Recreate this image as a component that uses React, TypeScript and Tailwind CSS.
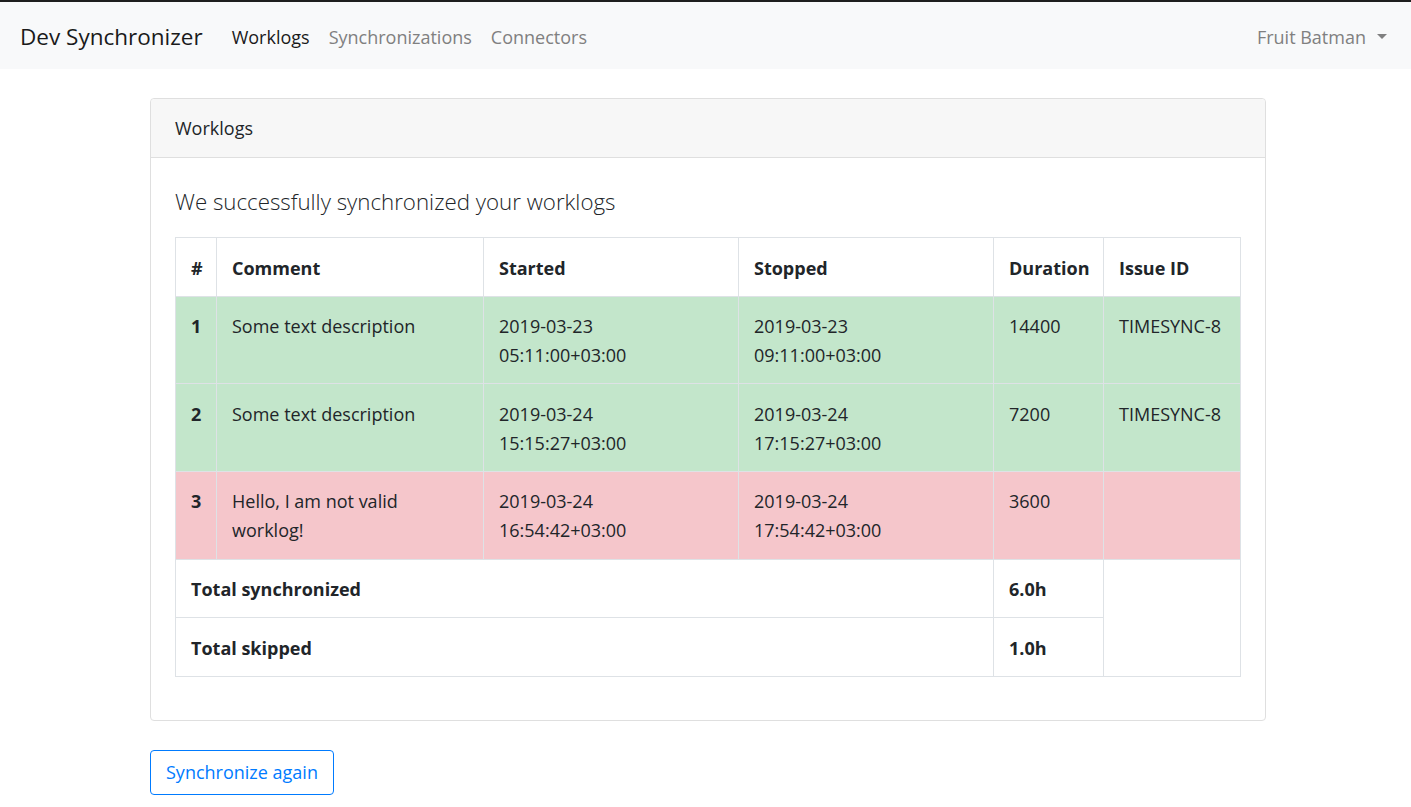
import React from "react";

const rows = [
  { n: 1, c: "Some text description", s: ["2019-03-23", "05:11:00+03:00"], e: ["2019-03-23", "09:11:00+03:00"], d: "14400", i: "TIMESYNC-8", ok: true },
  { n: 2, c: "Some text description", s: ["2019-03-24", "15:15:27+03:00"], e: ["2019-03-24", "17:15:27+03:00"], d: "7200", i: "TIMESYNC-8", ok: true },
  { n: 3, c: "Hello, I am not valid worklog!", s: ["2019-03-24", "16:54:42+03:00"], e: ["2019-03-24", "17:54:42+03:00"], d: "3600", i: "", ok: false },
];

export default function App() {
  const td = "border border-[#dee2e6] px-[15px] pt-[15.5px] pb-[13.5px] align-top";
  return (
    <div className="min-h-[807px] bg-white text-[#212529] text-[18px] leading-[28.8px]" style={{ fontFamily: '"Segoe UI", "Open Sans", sans-serif' }}>
      <nav className="h-[69px] border-t-2 border-[#1e1e1e] bg-[#f8f9fa] flex items-center pt-[3px] pl-[20px] pr-[24px]">
        <span className="text-[22.5px] text-[#1a1a1a] mr-[29px]">Dev Synchronizer</span>
        <div className="flex gap-[19px] text-[18px]">
          <span className="text-[#1a1a1a]">Worklogs</span>
          <span className="text-[#808080]">Synchronizations</span>
          <span className="text-[#808080]">Connectors</span>
        </div>
        <div className="ml-auto flex items-center text-[#808080]">
          <span>Fruit Batman</span>
          <span className="ml-[11px] w-0 h-0 border-l-[5px] border-r-[5px] border-t-[5px] border-l-transparent border-r-transparent border-t-[#808080]" />
        </div>
      </nav>
      <div className="pl-[150px] pr-[145px] pt-[29px]">
        <div className="border border-[#dfdfdf] rounded-[4px]">
          <div className="h-[59px] flex items-center pt-[1px] px-[24px] bg-[#f7f7f7] border-b border-[#dfdfdf] rounded-t-[4px]">Worklogs</div>
          <div className="px-[24px] pt-[31px] pb-[43px]">
            <h4 className="text-[22.3px] font-light leading-[26px] mb-[22px] text-[#212529]">We successfully synchronized your worklogs</h4>
            <table className="w-full border-collapse table-fixed">
              <colgroup>
                <col className="w-[41px]" />
                <col className="w-[267px]" />
                <col className="w-[255px]" />
                <col className="w-[255px]" />
                <col className="w-[110px]" />
                <col className="w-[137px]" />
              </colgroup>
              <thead>
                <tr className="font-bold text-left">
                  <th className={td}>#</th>
                  <th className={td}>Comment</th>
                  <th className={td}>Started</th>
                  <th className={td}>Stopped</th>
                  <th className={td}>Duration</th>
                  <th className={td}>Issue ID</th>
                </tr>
              </thead>
              <tbody>
                {rows.map((r) => (
                  <tr key={r.n} className={r.ok ? "bg-[#c3e6cb]" : "bg-[#f5c6cb]"}>
                    <td className={td + " font-bold"}>{r.n}</td>
                    <td className={td}>{r.c}</td>
                    <td className={td}>{r.s[0]}<br />{r.s[1]}</td>
                    <td className={td}>{r.e[0]}<br />{r.e[1]}</td>
                    <td className={td}>{r.d}</td>
                    <td className={td}>{r.i}</td>
                  </tr>
                ))}
                <tr className="font-bold">
                  <td className={td} colSpan={4}>Total synchronized</td>
                  <td className={td}>6.0h</td>
                  <td className={td} rowSpan={2}></td>
                </tr>
                <tr className="font-bold">
                  <td className={td} colSpan={4}>Total skipped</td>
                  <td className={td}>1.0h</td>
                </tr>
              </tbody>
            </table>
          </div>
        </div>
        <button className="mt-[29px] h-[45px] px-[15px] border border-[#007bff] text-[#007bff] rounded-[4px] text-[18px]">Synchronize again</button>
      </div>
    </div>
  );
}
